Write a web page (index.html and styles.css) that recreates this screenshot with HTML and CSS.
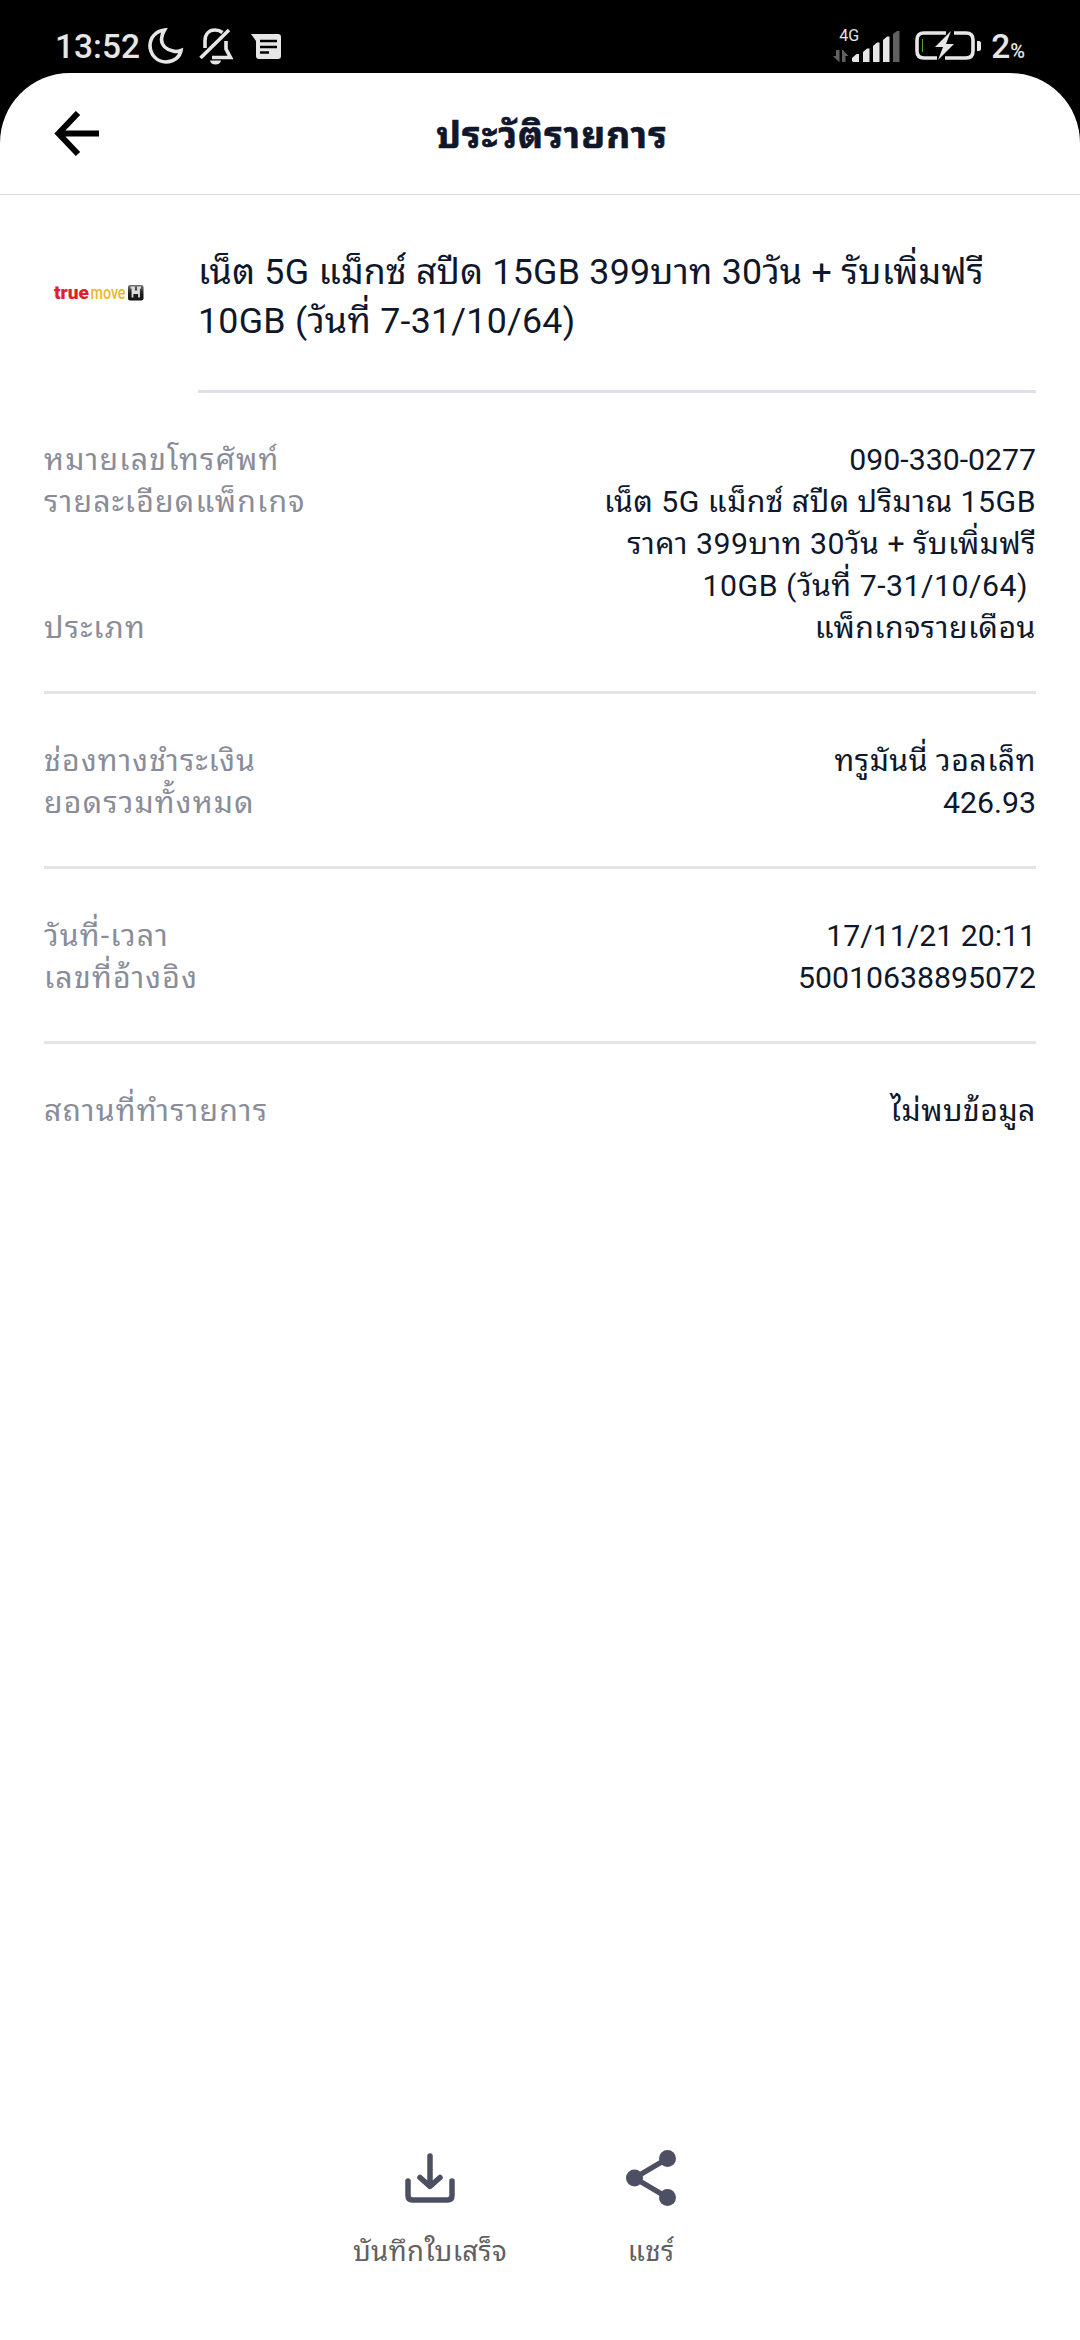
FILE: index.html
```
<!DOCTYPE html>
<html lang="th">
<head>
  <meta charset="utf-8">
  <title>ประวัติรายการ</title>
  <link rel="stylesheet" href="styles.css">
</head>

<body>
  <div class="status-bar">
    <span class="time">13:52</span>
    <svg class="moon" width="36" height="36" viewBox="0 0 36 36">
      <path d="M16.5 2C8 3 2 9.500 2 17.500C2 26.500 9 34 18 34C26 34 32 29 33 22.500C30 23.500 28 24 25 23C18 21.500 13.500 17 13.500 11C13.500 7 15 4.500 16.500 2Z" />
    </svg>
    <svg class="bell" width="36" height="40" viewBox="0 0 36 40">
      <path class="line" d="M7 21V14C7 7 11 3 17 3C20 3 22.500 4 24.500 5.500" />
      <path class="line" d="M28 14V22L32.500 30.500H14" />
      <path class="line" d="M2.500 31L31 3" />
      <path class="solid" d="M12 33.500H23C22.500 36 20.500 37.500 17.500 37.500C14.500 37.500 12.500 36 12 33.500Z" />
    </svg>
    <svg class="message" width="30" height="26" viewBox="0 0 30 26">
      <path class="solid" d="M0 0H27Q30 0 30 3V22Q30 25 27 25H8Q5 25 5 22V7Z" />
      <path class="cut" d="M9 7H26M9 13H26M9 18.500H18" />
    </svg>
    <div class="network">
      <span>4G</span>
      <svg width="68" height="33" viewBox="0 0 68 33">
        <path class="dim" d="M0 26H3V20H6.500V32H6Z M9 32V20H10L15.500 26H12.500V32Z" />
        <path class="solid" d="M19 31V28L23.500 24H26V32H20Z M30 32V22L34 18.500H36.500V32Z M40 32V16L44 12.500H46.500V32Z M50 32V10L54 6.500H56.500V32Z" />
        <path class="dim" d="M60 32V4L64 1H66.500V32Z" />
      </svg>
    </div>
    <svg class="battery" width="67" height="32" viewBox="0 0 67 32">
      <path class="line" d="M31 3H9Q2 3 2 10V21Q2 28 9 28H22" />
      <path class="line" d="M39 3H51Q58 3 58 10V21Q58 28 51 28H30" />
      <path class="solid" d="M36 1L20 17H28L23 30L39 14H31Z" />
      <path class="solid" d="M62 11H64Q66 11 66 13V19Q66 21 64 21H62Z" />
      <path class="level" d="M7.500 9V22" />
    </svg>
    <span class="percent">2<small>%</small></span>
  </div>

  <div class="screen">
    <div class="header">
      <svg class="back" width="46" height="46" viewBox="0 0 46 46">
        <path d="M24 2L4.500 22.500L24 43M4 22.500H45" />
      </svg>
      <h1>ประวัติรายการ</h1>
    </div>

    <div class="package">
      <div class="logo">
        <svg width="100" height="40" viewBox="0 0 100 40">
          <defs>
            <linearGradient id="badge" x1="0" y1="0" x2="0" y2="1">
              <stop offset="0" stop-color="#777" />
              <stop offset="0.5" stop-color="#222" />
              <stop offset="1" stop-color="#111" />
            </linearGradient>
          </defs>
          <text class="logo-true" x="5" y="24" textLength="35" lengthAdjust="spacingAndGlyphs">true</text>
          <text class="logo-move" x="41.500" y="24" textLength="35" lengthAdjust="spacingAndGlyphs">move</text>
          <rect x="79" y="10" width="15.500" height="15.500" rx="2" fill="url(#badge)" />
          <path class="logo-h" d="M81.500 12.500H85V16.500H89V12.500H92M83.500 12.500V22.500M90 12.500V22.500M83.500 18H90" />
        </svg>
      </div>
      <div class="name">เน็ต 5G แม็กซ์ สปีด 15GB 399บาท 30วัน + รับเพิ่มฟรี<br>10GB (วันที่ 7-31/10/64)</div>
    </div>

    <div class="details">
      <div class="group">
        <div class="row"><span class="label">หมายเลขโทรศัพท์</span><span class="value number">090-330-0277</span></div>
        <div class="row"><span class="label">รายละเอียดแพ็กเกจ</span><span class="value">เน็ต 5G แม็กซ์ สปีด ปริมาณ 15GB<br>ราคา 399บาท 30วัน + รับเพิ่มฟรี<br>10GB (วันที่ 7-31/10/64)&nbsp;</span></div>
        <div class="row"><span class="label">ประเภท</span><span class="value">แพ็กเกจรายเดือน</span></div>
      </div>
      <div class="group">
        <div class="row"><span class="label">ช่องทางชำระเงิน</span><span class="value">ทรูมันนี่ วอลเล็ท</span></div>
        <div class="row"><span class="label">ยอดรวมทั้งหมด</span><span class="value number">426.93</span></div>
      </div>
      <div class="group">
        <div class="row"><span class="label">วันที่-เวลา</span><span class="value number">17/11/21 20:11</span></div>
        <div class="row"><span class="label">เลขที่อ้างอิง</span><span class="value number">50010638895072</span></div>
      </div>
      <div class="group">
        <div class="row"><span class="label">สถานที่ทำรายการ</span><span class="value">ไม่พบข้อมูล</span></div>
      </div>
    </div>

    <div class="actions">
      <div class="action">
        <svg width="60" height="60" viewBox="0 0 60 60">
          <path class="stroke" d="M8 33V47.500Q8 52 12.500 52H47.500Q52 52 52 47.500V33M30 8V38M20 29.500L30 38.500L40 29.500" />
        </svg>
        <span>บันทึกใบเสร็จ</span>
      </div>
      <div class="action">
        <svg width="60" height="60" viewBox="0 0 60 60">
          <path class="stroke" d="M46.500 10.500L13.500 30L46.500 49.500" />
          <circle cx="46.500" cy="10.500" r="8.500" />
          <circle cx="13.500" cy="30" r="8.500" />
          <circle cx="46.500" cy="49.500" r="8.500" />
        </svg>
        <span>แชร์</span>
      </div>
    </div>
  </div>
</body>

</html>
```
FILE: styles.css
```
body {
  margin: 0;
  width: 1080px;
  height: 2340px;
  overflow: hidden;
  display: flex;
  flex-direction: column;
  background: #000;
  color: #0f172b;
  font-family: Roboto, "Noto Sans Thai Looped", "Noto Looped Thai", Loma, Laksaman, Garuda, Waree, "Droid Sans Thai", "Noto Sans", sans-serif;
}

svg {
  display: block;
  flex: none;
}

.status-bar {
  height: 73px;
  box-sizing: border-box;
  padding: 27px 55px 0 55px;
  display: flex;
  align-items: flex-start;
  color: #e6e6e6;
}

.status-bar .solid {
  fill: #e6e6e6;
}

.status-bar .dim {
  fill: #606060;
}

.status-bar .line,
.moon path {
  fill: none;
  stroke: #e6e6e6;
  stroke-width: 3.6;
}

.time,
.percent {
  font-size: 33.5px;
  font-weight: 500;
  line-height: 40px;
}

.moon {
  margin: 1px 0 0 8px;
}

.bell {
  margin: 0 0 0 14px;
}

.message {
  margin: 7px 0 0 17px;
}

.message .cut {
  stroke: #000;
  stroke-width: 2.6;
}

.network {
  margin-left: auto;
  width: 68px;
  display: grid;
}

.network span,
.network svg {
  grid-area: 1 / 1;
}

.network span {
  padding-left: 6px;
  font-size: 16px;
  line-height: 18px;
}

.network svg {
  margin-top: 3px;
}

.battery {
  margin: 3px 9px 0 14px;
}

.battery .level {
  stroke: #55a030;
  stroke-width: 1;
}

.percent small {
  font-size: 20px;
}

.screen {
  flex: 1;
  display: flex;
  flex-direction: column;
  background: #fff;
  border-radius: 70px 70px 0 0;
}

.header {
  height: 121px;
  border-bottom: 1px solid #dcdcdc;
  display: grid;
  grid-template-columns: 198px 1fr 174px;
  align-items: center;
}

.back {
  margin-left: 54px;
}

.back path {
  fill: none;
  stroke: #000;
  stroke-width: 6;
}

h1 {
  margin: 0;
  padding-top: 4px;
  text-align: center;
  font-size: 37px;
  line-height: 50px;
  font-weight: 700;
  letter-spacing: 1.1px;
  -webkit-text-stroke: 0.7px #0f172b;
}

.package {
  display: flex;
  padding: 53px 44px 0 0;
}

.logo {
  width: 198px;
  box-sizing: border-box;
  padding: 27px 0 0 49px;
}

.logo text {
  font-family: Roboto, sans-serif;
  font-size: 19px;
}

.logo-true {
  fill: #e0202c;
  font-weight: 900;
}

.logo-move {
  fill: #eab72c;
  font-weight: 500;
}

.logo-h {
  fill: none;
  stroke: #ddd;
  stroke-width: 1.8;
}

.name {
  flex: 1;
  height: 142px;
  border-bottom: 3px solid #dde0e7;
  font-size: 35.75px;
  line-height: 49px;
  letter-spacing: 0.25px;
  white-space: nowrap;
}

.details {
  padding: 0 44px;
}

.group {
  padding: 46px 0 42px;
  border-bottom: 3px solid #e4e4e4;
}

.group:last-child {
  border-bottom: none;
}

.row {
  display: flex;
  justify-content: space-between;
  font-size: 30.25px;
  line-height: 42px;
}

.label {
  color: #8a8d99;
  letter-spacing: 1.2px;
}

.value {
  text-align: right;
  letter-spacing: 0.5px;
}

.number {
  letter-spacing: 0;
}

.actions {
  margin-top: auto;
  padding: 0 0 69px 350px;
  display: flex;
  gap: 61px;
}

.action {
  width: 160px;
  display: flex;
  flex-direction: column;
  align-items: center;
  gap: 25px;
  color: #606060;
  font-size: 27.5px;
  line-height: 38px;
  letter-spacing: 0.4px;
}

.action svg {
  fill: #4c5062;
}

.action .stroke {
  fill: none;
  stroke: #4c5062;
  stroke-width: 5.5;
  stroke-linecap: round;
  stroke-linejoin: round;
}
```
